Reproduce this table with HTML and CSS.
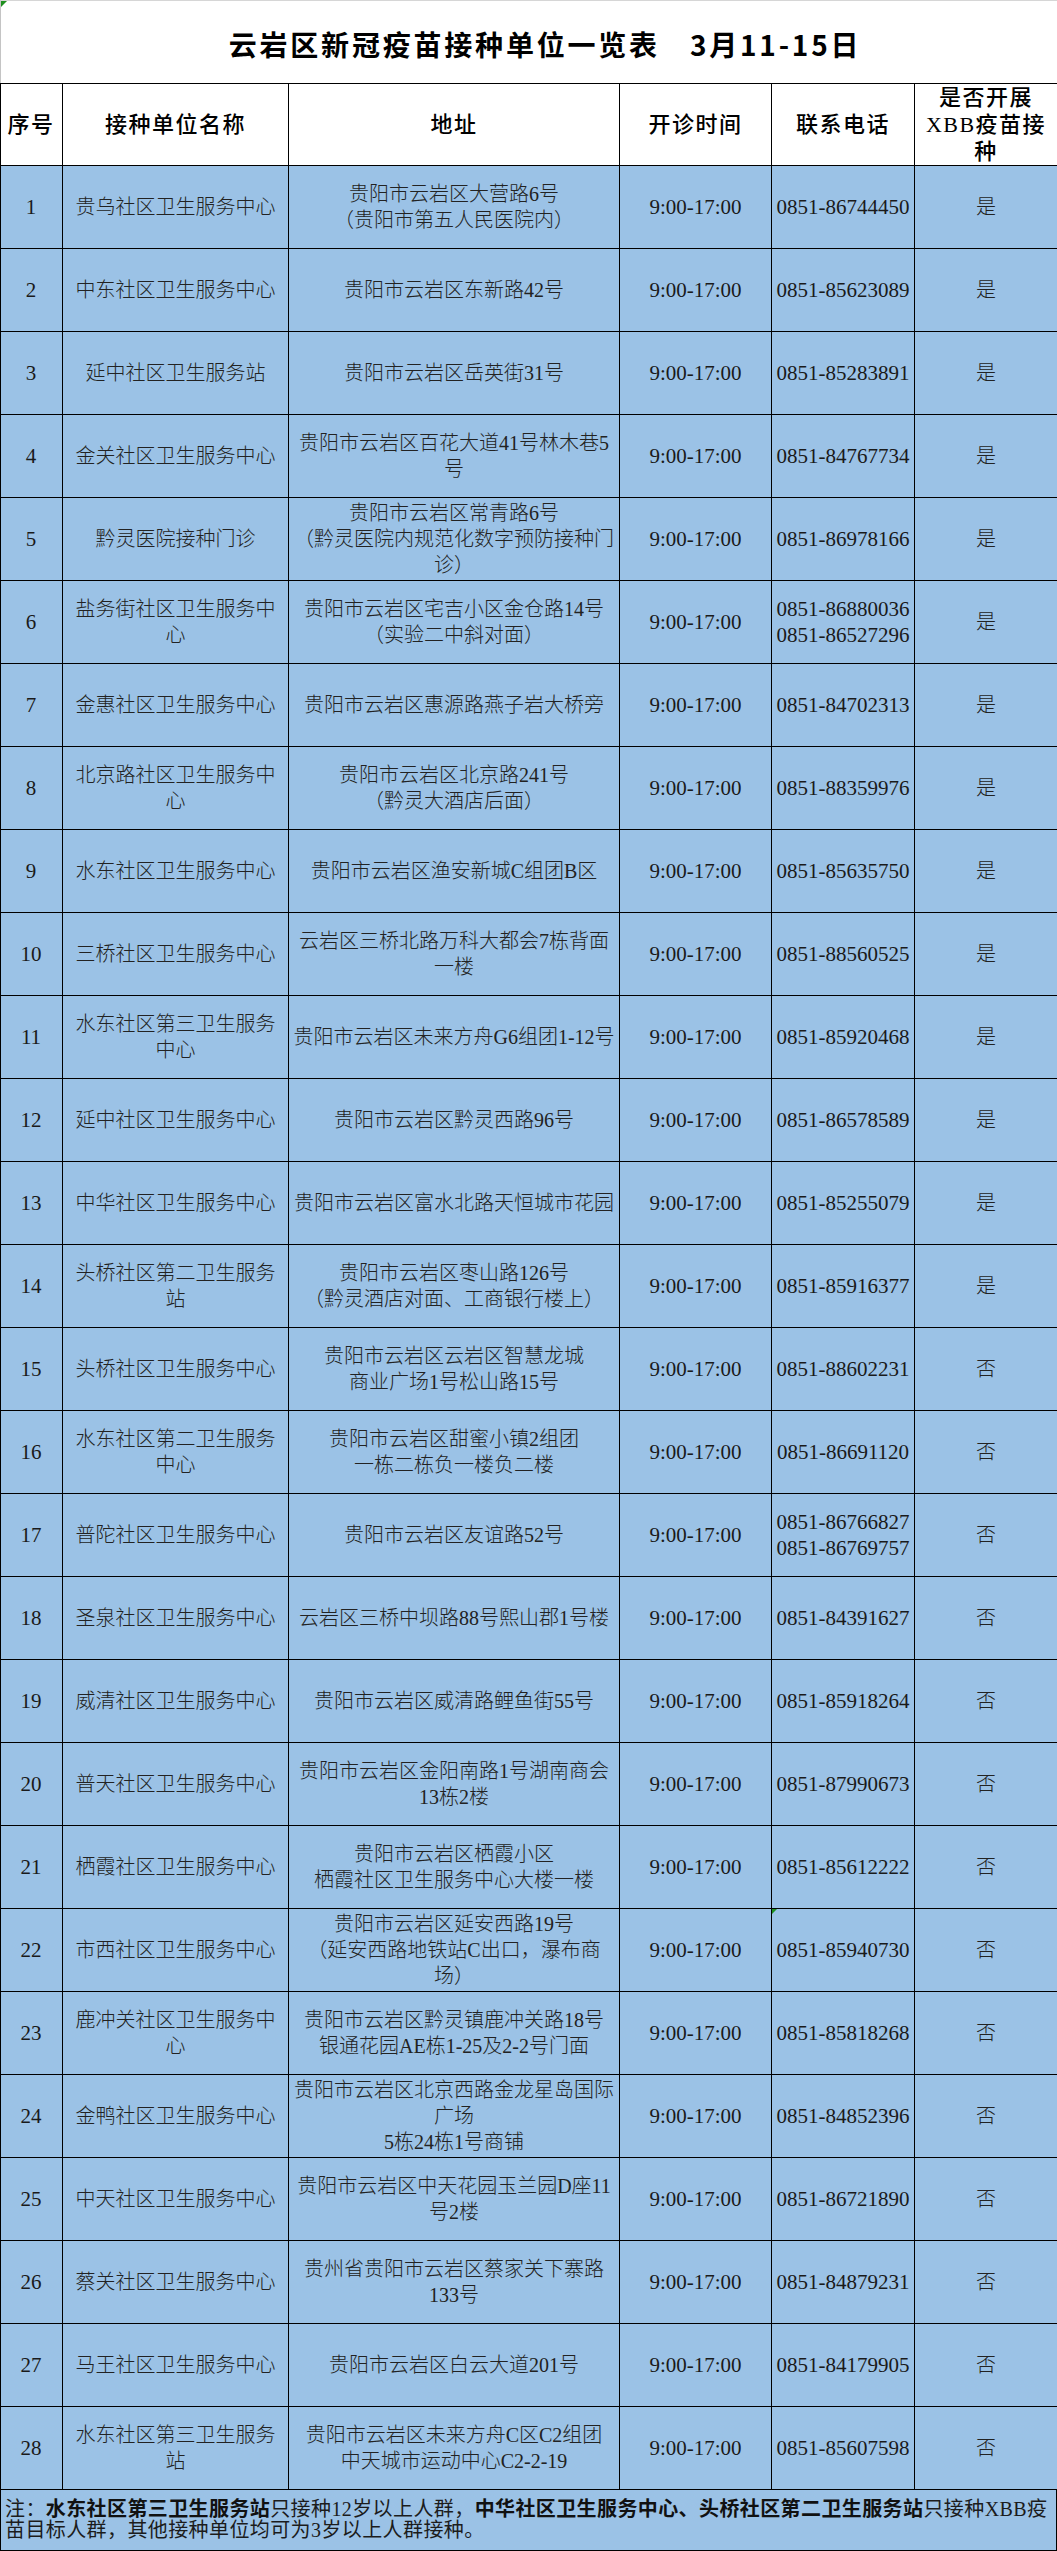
FILE: index.html
```html
<!DOCTYPE html>
<html lang="zh-CN">
<head>
<meta charset="utf-8">
<title>云岩区新冠疫苗接种单位一览表</title>
<link rel="stylesheet" href="styles.css">
</head>
<body>
<div class="sheet" role="table">
  <div class="title corner">云岩区新冠疫苗接种单位一览表<span class="gap"></span>3月11-15日</div>
  <div class="row head" role="row">
    <div class="cell" role="columnheader">序号</div>
    <div class="cell" role="columnheader">接种单位名称</div>
    <div class="cell" role="columnheader">地址</div>
    <div class="cell" role="columnheader">开诊时间</div>
    <div class="cell" role="columnheader">联系电话</div>
    <div class="cell" role="columnheader">是否开展<br>XBB疫苗接<br>种</div>
  </div>
  <div class="row" role="row"><div class="cell">1</div><div class="cell">贵乌社区卫生服务中心</div><div class="cell">贵阳市云岩区大营路6号<br>（贵阳市第五人民医院内）</div><div class="cell">9:00-17:00</div><div class="cell">0851-86744450</div><div class="cell">是</div></div>
  <div class="row" role="row"><div class="cell">2</div><div class="cell">中东社区卫生服务中心</div><div class="cell">贵阳市云岩区东新路42号</div><div class="cell">9:00-17:00</div><div class="cell">0851-85623089</div><div class="cell">是</div></div>
  <div class="row" role="row"><div class="cell">3</div><div class="cell">延中社区卫生服务站</div><div class="cell">贵阳市云岩区岳英街31号</div><div class="cell">9:00-17:00</div><div class="cell">0851-85283891</div><div class="cell">是</div></div>
  <div class="row" role="row"><div class="cell">4</div><div class="cell">金关社区卫生服务中心</div><div class="cell">贵阳市云岩区百花大道41号林木巷5<br>号</div><div class="cell">9:00-17:00</div><div class="cell">0851-84767734</div><div class="cell">是</div></div>
  <div class="row" role="row"><div class="cell">5</div><div class="cell">黔灵医院接种门诊</div><div class="cell">贵阳市云岩区常青路6号<br>（黔灵医院内规范化数字预防接种门<br>诊）</div><div class="cell">9:00-17:00</div><div class="cell">0851-86978166</div><div class="cell">是</div></div>
  <div class="row" role="row"><div class="cell">6</div><div class="cell">盐务街社区卫生服务中<br>心</div><div class="cell">贵阳市云岩区宅吉小区金仓路14号<br>（实验二中斜对面）</div><div class="cell">9:00-17:00</div><div class="cell">0851-86880036<br>0851-86527296</div><div class="cell">是</div></div>
  <div class="row" role="row"><div class="cell">7</div><div class="cell">金惠社区卫生服务中心</div><div class="cell">贵阳市云岩区惠源路燕子岩大桥旁</div><div class="cell">9:00-17:00</div><div class="cell">0851-84702313</div><div class="cell">是</div></div>
  <div class="row" role="row"><div class="cell">8</div><div class="cell">北京路社区卫生服务中<br>心</div><div class="cell">贵阳市云岩区北京路241号<br>（黔灵大酒店后面）</div><div class="cell">9:00-17:00</div><div class="cell">0851-88359976</div><div class="cell">是</div></div>
  <div class="row" role="row"><div class="cell">9</div><div class="cell">水东社区卫生服务中心</div><div class="cell">贵阳市云岩区渔安新城C组团B区</div><div class="cell">9:00-17:00</div><div class="cell">0851-85635750</div><div class="cell">是</div></div>
  <div class="row" role="row"><div class="cell">10</div><div class="cell">三桥社区卫生服务中心</div><div class="cell">云岩区三桥北路万科大都会7栋背面<br>一楼</div><div class="cell">9:00-17:00</div><div class="cell">0851-88560525</div><div class="cell">是</div></div>
  <div class="row" role="row"><div class="cell">11</div><div class="cell">水东社区第三卫生服务<br>中心</div><div class="cell">贵阳市云岩区未来方舟G6组团1-12号</div><div class="cell">9:00-17:00</div><div class="cell">0851-85920468</div><div class="cell">是</div></div>
  <div class="row" role="row"><div class="cell">12</div><div class="cell">延中社区卫生服务中心</div><div class="cell">贵阳市云岩区黔灵西路96号</div><div class="cell">9:00-17:00</div><div class="cell">0851-86578589</div><div class="cell">是</div></div>
  <div class="row" role="row"><div class="cell">13</div><div class="cell">中华社区卫生服务中心</div><div class="cell">贵阳市云岩区富水北路天恒城市花园</div><div class="cell">9:00-17:00</div><div class="cell">0851-85255079</div><div class="cell">是</div></div>
  <div class="row" role="row"><div class="cell">14</div><div class="cell">头桥社区第二卫生服务<br>站</div><div class="cell">贵阳市云岩区枣山路126号<br>（黔灵酒店对面、工商银行楼上）</div><div class="cell">9:00-17:00</div><div class="cell">0851-85916377</div><div class="cell">是</div></div>
  <div class="row" role="row"><div class="cell">15</div><div class="cell">头桥社区卫生服务中心</div><div class="cell">贵阳市云岩区云岩区智慧龙城<br>商业广场1号松山路15号</div><div class="cell">9:00-17:00</div><div class="cell">0851-88602231</div><div class="cell">否</div></div>
  <div class="row" role="row"><div class="cell">16</div><div class="cell">水东社区第二卫生服务<br>中心</div><div class="cell">贵阳市云岩区甜蜜小镇2组团<br>一栋二栋负一楼负二楼</div><div class="cell">9:00-17:00</div><div class="cell">0851-86691120</div><div class="cell">否</div></div>
  <div class="row" role="row"><div class="cell">17</div><div class="cell">普陀社区卫生服务中心</div><div class="cell">贵阳市云岩区友谊路52号</div><div class="cell">9:00-17:00</div><div class="cell">0851-86766827<br>0851-86769757</div><div class="cell">否</div></div>
  <div class="row" role="row"><div class="cell">18</div><div class="cell">圣泉社区卫生服务中心</div><div class="cell">云岩区三桥中坝路88号熙山郡1号楼</div><div class="cell">9:00-17:00</div><div class="cell">0851-84391627</div><div class="cell">否</div></div>
  <div class="row" role="row"><div class="cell">19</div><div class="cell">威清社区卫生服务中心</div><div class="cell">贵阳市云岩区威清路鲤鱼街55号</div><div class="cell">9:00-17:00</div><div class="cell">0851-85918264</div><div class="cell">否</div></div>
  <div class="row" role="row"><div class="cell">20</div><div class="cell">普天社区卫生服务中心</div><div class="cell">贵阳市云岩区金阳南路1号湖南商会<br>13栋2楼</div><div class="cell">9:00-17:00</div><div class="cell">0851-87990673</div><div class="cell">否</div></div>
  <div class="row" role="row"><div class="cell">21</div><div class="cell">栖霞社区卫生服务中心</div><div class="cell">贵阳市云岩区栖霞小区<br>栖霞社区卫生服务中心大楼一楼</div><div class="cell">9:00-17:00</div><div class="cell">0851-85612222</div><div class="cell">否</div></div>
  <div class="row" role="row"><div class="cell">22</div><div class="cell">市西社区卫生服务中心</div><div class="cell">贵阳市云岩区延安西路19号<br>（延安西路地铁站C出口，瀑布商<br>场）</div><div class="cell">9:00-17:00</div><div class="cell flag">0851-85940730</div><div class="cell">否</div></div>
  <div class="row" role="row"><div class="cell">23</div><div class="cell">鹿冲关社区卫生服务中<br>心</div><div class="cell">贵阳市云岩区黔灵镇鹿冲关路18号<br>银通花园AE栋1-25及2-2号门面</div><div class="cell">9:00-17:00</div><div class="cell">0851-85818268</div><div class="cell">否</div></div>
  <div class="row" role="row"><div class="cell">24</div><div class="cell">金鸭社区卫生服务中心</div><div class="cell">贵阳市云岩区北京西路金龙星岛国际<br>广场<br>5栋24栋1号商铺</div><div class="cell">9:00-17:00</div><div class="cell">0851-84852396</div><div class="cell">否</div></div>
  <div class="row" role="row"><div class="cell">25</div><div class="cell">中天社区卫生服务中心</div><div class="cell">贵阳市云岩区中天花园玉兰园D座11<br>号2楼</div><div class="cell">9:00-17:00</div><div class="cell">0851-86721890</div><div class="cell">否</div></div>
  <div class="row" role="row"><div class="cell">26</div><div class="cell">蔡关社区卫生服务中心</div><div class="cell">贵州省贵阳市云岩区蔡家关下寨路<br>133号</div><div class="cell">9:00-17:00</div><div class="cell">0851-84879231</div><div class="cell">否</div></div>
  <div class="row" role="row"><div class="cell">27</div><div class="cell">马王社区卫生服务中心</div><div class="cell">贵阳市云岩区白云大道201号</div><div class="cell">9:00-17:00</div><div class="cell">0851-84179905</div><div class="cell">否</div></div>
  <div class="row" role="row"><div class="cell">28</div><div class="cell">水东社区第三卫生服务<br>站</div><div class="cell">贵阳市云岩区未来方舟C区C2组团<br>中天城市运动中心C2-2-19</div><div class="cell">9:00-17:00</div><div class="cell">0851-85607598</div><div class="cell">否</div></div>
  <div class="note" role="row">
    <div class="note-text">注：<b>水东社区第三卫生服务站</b>只接种12岁以上人群，<b>中华社区卫生服务中心、头桥社区第二卫生服务站</b>只接种XBB疫<br>苗目标人群，其他接种单位均可为3岁以上人群接种。</div>
  </div>
</div>
</body>
</html>
```

FILE: styles.css
```css
html, body {
  margin: 0;
  padding: 0;
  background: #ffffff;
}

body {
  width: 1057px;
  font-family: "Liberation Serif", "Noto Sans CJK SC", serif;
  color: #222222;
}

.sheet {
  width: 1057px;
  display: flex;
  flex-direction: column;
}

.title {
  position: relative;
  height: 83px;
  box-sizing: border-box;
  border-top: 1px solid #d6d6d6;
  border-left: 1px solid #c4c4c4;
  display: flex;
  align-items: center;
  justify-content: center;
  padding-left: 32px;
  padding-top: 4px;
  font-family: "Noto Sans CJK SC", "Liberation Sans", sans-serif;
  font-weight: 700;
  font-size: 28px;
  letter-spacing: 2.8px;
  color: #000000;
  white-space: nowrap;
}

.title .gap {
  display: inline-block;
  width: 30px;
}

.corner::before {
  content: "";
  position: absolute;
  left: 0;
  top: 0;
  border-top: 6px solid #1f8f1f;
  border-right: 6px solid transparent;
}

.row {
  display: grid;
  grid-template-columns: 62px 226px 331px 152px 143px 143px;
  height: 83px;
  box-sizing: border-box;
  border-bottom: 1px solid #000000;
  border-left: 1px solid #000000;
  background: #9bc2e6;
}

.row.head {
  background: #ffffff;
  border-top: 1px solid #000000;
}

.cell {
  box-sizing: border-box;
  border-right: 1px solid #000000;
  display: flex;
  align-items: center;
  justify-content: center;
  text-align: center;
  white-space: nowrap;
  overflow: hidden;
  font-size: 20px;
  font-weight: 300;
  line-height: 26px;
  color: #222222;
}

.row .cell:first-child {
  margin-left: -1px;
}

.row:not(.head) .cell:nth-child(1),
.row:not(.head) .cell:nth-child(4),
.row:not(.head) .cell:nth-child(5) {
  font-size: 21px;
  font-weight: 400;
  color: #1a1a1a;
}

.row.head .cell {
  font-weight: 500;
  font-size: 22px;
  letter-spacing: 1.5px;
  line-height: 27px;
  color: #000000;
}

.cell.flag {
  position: relative;
}

.cell.flag::before {
  content: "";
  position: absolute;
  left: 0;
  top: 0;
  border-top: 5px solid #1f8f1f;
  border-right: 5px solid transparent;
}

.note {
  height: 61px;
  box-sizing: border-box;
  border-left: 1px solid #000000;
  border-right: 1px solid #000000;
  border-bottom: 1px solid #000000;
  background: #9bc2e6;
  display: flex;
  align-items: center;
  padding-left: 4px;
}

.note-text {
  font-size: 20px;
  font-weight: 400;
  letter-spacing: 0.4px;
  line-height: 21px;
  color: #1c1c1c;
  white-space: nowrap;
}

.note-text b {
  font-weight: 700;
  color: #111111;
}
```
